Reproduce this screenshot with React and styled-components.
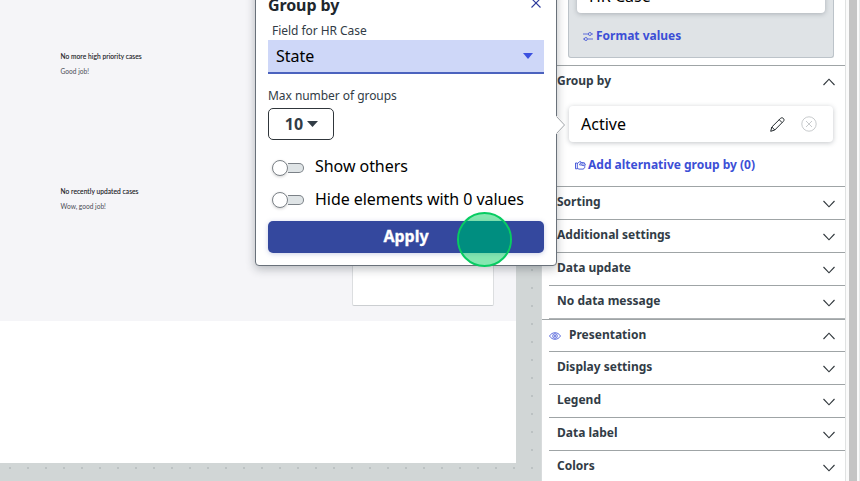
import React from "react";
import styled, { createGlobalStyle, css } from "styled-components";

const GlobalStyle = createGlobalStyle`
  *, *::before, *::after { box-sizing: border-box; }
  body { margin: 0; overflow: hidden; font-family: "Noto Sans", "Open Sans", sans-serif; }
  button { font: inherit; cursor: pointer; }
`;

const Screen = styled.div`
  position: relative;
  display: grid;
  grid-template-columns: 541px 304px 15px;
  width: 860px;
  height: 481px;
  overflow: hidden;
  background: #fff;
`;

/* Canvas */
const Canvas = styled.main`
  height: 481px;
  background-color: #d1d6d6;
  background-image: radial-gradient(circle at 9px 9px, #bcc2c3 0.9px, transparent 1.5px);
  background-size: 18px 18px;
  background-position: 1px 9px;
`;

const Page = styled.div`
  width: 516px;
  height: 463px;
  background: #fff;
`;

const Dashboard = styled.div`
  display: flex;
  justify-content: space-between;
  height: 321px;
  padding: 0 22px 0 60.5px;
  background: #f5f5f8;
`;

const Messages = styled.div`
  display: flex;
  flex-direction: column;
  gap: 105px;
  padding-top: 51px;
  font-family: Lato, sans-serif;
`;

const Message = styled.div`
  display: grid;
  grid-template-rows: 15px 15px;
  font-size: 6.6px;
  line-height: 10px;
  color: #4a4c55;
`;

const MessageTitle = styled.div`
  letter-spacing: 0.07px;
  color: #16181c;
  -webkit-text-stroke: 0.1px #16181c;
`;

const Widget = styled.div`
  width: 142px;
  height: 306px;
  border: 1px solid #dcdee0;
  border-bottom-color: #cbced1;
  border-radius: 2px;
  background: #fff;
`;

/* Sidebar */
const Sidebar = styled.aside`
  border-left: 1px solid #d8dbdc;
  height: 481px;
  overflow: hidden;
  background: #fff;
  color: #323c46;
`;

const SourceArea = styled.div`
  height: 65px;
  padding: 0 11px 0 26px;
`;

const SourceBox = styled.div`
  display: flex;
  flex-direction: column;
  justify-content: flex-end;
  align-items: stretch;
  height: 58px;
  padding: 0 8px 12px;
  border: 1px solid #bcc3c9;
  border-top: 0;
  border-radius: 0 0 3px 3px;
  background: #dfe3e6;
`;

const fieldCard = css`
  display: flex;
  align-items: center;
  border-radius: 4px;
  background: #fff;
  box-shadow: 0 1px 5px rgba(40, 50, 60, 0.28);
  color: #000;
  font-size: 16px;
`;

const SourceCard = styled.div`
  ${fieldCard}
  flex: none;
  height: 36px;
  padding: 1px 12px 0;
`;

const GroupCard = styled.div`
  ${fieldCard}
  height: 36px;
  margin: 10px 12px 0 20px;
  padding: 0 16px 0 12px;
`;

const CardLabel = styled.span`
  flex: 1;
`;

const CardActions = styled.span`
  display: flex;
  align-items: center;
  gap: 16px;
`;

const LinkButton = styled.button`
  display: flex;
  flex: none;
  align-items: center;
  gap: ${(p) => p.$gap}px;
  height: 18px;
  margin: ${(p) => p.$margin};
  padding: 0;
  border: 0;
  background: none;
  color: #3c4fd6;
  font-size: 12px;
  font-weight: 700;
  line-height: 18px;
  white-space: nowrap;
`;

const Section = styled.section`
  height: ${(p) => p.$height || 33}px;
  margin-left: ${(p) => (p.$wide ? 0 : 7)}px;
  border-top: 1px solid #9fa4a6;

  ${(p) =>
    p.$closing &&
    css`
      height: 34px;
      border-bottom: 1px solid #b0b4b6;
    `}
`;

const SectionHead = styled.div`
  display: flex;
  align-items: center;
  justify-content: space-between;
  height: 30px;
  padding: 0 10px 0 ${(p) => (p.$icon ? 7 : 8)}px;
  font-size: 12px;
  font-weight: 700;
  line-height: 18px;
`;

const SectionTitle = styled.span`
  display: flex;
  align-items: center;
  gap: 8px;
`;

const ChevronIcon = styled.svg`
  display: block;
  width: 12px;
  height: 8px;
  margin-top: ${(p) => (p.$up ? 2 : 4)}px;
  transform: ${(p) => (p.$up ? "scaleY(-1)" : "none")};
`;

const Icon = styled.svg`
  display: block;
  flex: none;
  fill: none;
  stroke: ${(p) => p.$color || "#3c4fd6"};
  stroke-width: ${(p) => p.$weight || 1};
`;

const ScrollTrack = styled.div`
  display: flex;
  padding: 0 3px 0 3px;
  border-left: 1px solid #e0e2e2;
  border-right: 1px solid #e6e8e8;
  background: #fafafa;
`;

const ScrollThumb = styled.div`
  flex: none;
  width: 8px;
  height: 481px;
  background: #c4c4c4;
`;

/* Popup */
const Popup = styled.div`
  position: absolute;
  left: 255px;
  top: -14px;
  width: 302px;
  height: 280px;
  padding: 8px 12px 0;
  border: 1px solid #69717a;
  border-radius: 4px;
  background: #fff;
  box-shadow: 0 3px 10px rgba(30, 40, 50, 0.3);
  color: #323c46;
`;

const PopupArrow = styled.svg`
  position: absolute;
  left: 299px;
  top: 128px;
  width: 11px;
  height: 20px;
`;

const PopupHead = styled.header`
  display: flex;
  justify-content: space-between;
  height: 27px;
  padding-right: 3px;
  color: #20272d;
  font-size: 16px;
  font-weight: 700;
  letter-spacing: -0.1px;
  line-height: 20px;
`;

const CloseIcon = styled.svg`
  width: 10px;
  height: 10px;
  margin-top: 3px;
`;

const Label = styled.div`
  height: ${(p) => p.$height}px;
  padding-left: ${(p) => p.$inset || 0}px;
  font-size: 12px;
  letter-spacing: -0.05px;
  line-height: 18px;
`;

const Select = styled.div`
  display: flex;
  align-items: center;
  justify-content: space-between;
  height: 34px;
  margin-bottom: 13px;
  padding: 0 11px 0 8px;
  border-bottom: 2px solid #4b62be;
  background: #ced7f8;
  color: #000;
  font-size: 16px;
`;

const NumberButton = styled.button`
  display: flex;
  align-items: center;
  justify-content: center;
  gap: 4px;
  width: 66px;
  height: 32px;
  padding: 0 0 1px 1px;
  border: 1px solid #30363b;
  border-radius: 5px;
  background: #fff;
  color: #323c46;
  font-size: 16px;
  font-weight: 700;
`;

const Caret = styled.svg`
  display: block;
  width: ${(p) => p.$width}px;
  height: 6px;
  fill: ${(p) => p.$color};
  margin-top: ${(p) => p.$drop || 0}px;
`;

const Toggles = styled.div`
  display: grid;
  grid-template-rows: 32px 32px;
  margin-top: 11px;
`;

const ToggleRow = styled.label`
  display: flex;
  align-items: center;
  gap: 11px;
  padding-left: 4px;
  color: #000;
  font-size: 16px;
  letter-spacing: -0.05px;
  line-height: 22px;
`;

const ToggleText = styled.span`
  margin-top: ${(p) => p.$shift}px;
`;

const Switch = styled.span`
  display: flex;
  align-items: center;
  width: 32px;
  height: 16px;
  margin-top: 1px;
`;

const Knob = styled.span`
  flex: none;
  width: 16px;
  height: 16px;
  border: 1px solid #7b8187;
  border-radius: 50%;
  background: #fff;
  box-shadow: 0 1px 3px rgba(0, 0, 0, 0.18);
`;

const Track = styled.span`
  flex: 1;
  height: 10px;
  border: 1px solid #7b8187;
  border-left: 0;
  border-radius: 0 5px 5px 0;
  background: #dfe4e6;
`;

const ApplyButton = styled.button`
  display: block;
  width: 276px;
  height: 32px;
  margin-top: 6px;
  padding: 0 0 2px;
  border: 0;
  border-radius: 5px;
  background: #34489e;
  box-shadow: 0 1px 5px rgba(52, 72, 158, 0.25);
  color: #fff;
  font-size: 16px;
  font-weight: 700;
  -webkit-text-stroke: 0.3px #fff;
`;

const ClickMarker = styled.div`
  position: absolute;
  left: 457px;
  top: 212px;
  width: 55px;
  height: 55px;
  border: 2px solid #07cc62;
  border-radius: 50%;
  background: rgba(0, 205, 92, 0.48);
`;

const MarkerCore = styled.div`
  height: 32px;
  margin-top: 7px;
  background: #008e80;
`;

const MarkerClip = styled.div`
  width: 51px;
  height: 51px;
  overflow: hidden;
  border-radius: 50%;
`;

function Chevron({ up }) {
  return (
    <ChevronIcon viewBox="0 0 12 8" $up={up}>
      <path d="M.5 1 6 6.8 11.5 1" fill="none" stroke="#30373c" strokeWidth="1.1" />
    </ChevronIcon>
  );
}

function Head({ children, up, icon }) {
  return (
    <SectionHead $icon={Boolean(icon)}>
      <SectionTitle>
        {icon}
        {children}
      </SectionTitle>
      <Chevron up={up} />
    </SectionHead>
  );
}

const SlidersIcon = () => (
  <Icon width="10" height="10" viewBox="0 0 10 10" $weight="0.8">
    <path d="M0 3h5.2M8.5 3H10M0 8h1.2M4.7 8H10" />
    <circle cx="6.9" cy="3" r="1.5" />
    <circle cx="2.9" cy="8" r="1.5" />
  </Icon>
);

const HandIcon = () => (
  <Icon width="11" height="10" viewBox="0 0 11 10" $weight="0.9">
    <path d="M.5 3h1.8v5.8H.5zM2.3 3.6 4.6 1.7c.8-.6 1.7 0 1.2.9h3c1.1 0 1.1 1.2.2 1.3h.6c1.1 0 1 1.5 0 1.5.8.1.7 1.4-.2 1.4.5.2.4 1.3-.5 1.3.2.5-.2 1-.8 1H4L2.3 8.4" />
    <path d="M5.8 2.6 4.5 4.9c1 .7 1.7-.1 2-1h2.3M6.4 5.4h2.8" />
  </Icon>
);

const EyeIcon = () => (
  <Icon width="12" height="10" viewBox="0 -2 12 10" $weight="0.8">
    <path d="M.5 4C3.2-.4 8.8-.4 11.5 4 8.8 8.4 3.2 8.4.5 4Z" />
    <circle cx="6" cy="4" r="2.3" />
    <circle cx="6" cy="4" r=".8" />
  </Icon>
);

const PencilIcon = () => (
  <Icon width="15" height="15" viewBox="0 0 15 15" $color="#22282c">
    <path d="M.7 14.3 1.8 10 10.5 1.4c1.9-1.8 4.8.9 2.9 2.9L4.8 13ZM1.8 10 4.8 13M9.2 2.7l2.9 2.9" />
  </Icon>
);

const ClearIcon = () => (
  <Icon width="16" height="16" viewBox="0 0 16 16" $color="#c8cbcd">
    <circle cx="8" cy="8" r="7.2" />
    <path d="m5 5 6 6M11 5l-6 6" />
  </Icon>
);

function Toggle({ children, shift = -2 }) {
  return (
    <ToggleRow>
      <Switch>
        <Knob />
        <Track />
      </Switch>
      <ToggleText $shift={shift}>{children}</ToggleText>
    </ToggleRow>
  );
}

const dataSections = ["Sorting", "Additional settings", "Data update", "No data message"];
const displaySections = ["Display settings", "Legend", "Data label", "Colors"];

export default function App() {
  return (
    <Screen>
      <GlobalStyle />
      <Canvas>
        <Page>
          <Dashboard>
            <Messages>
              <Message>
                <MessageTitle>No more high priority cases</MessageTitle>
                <div>Good job!</div>
              </Message>
              <Message>
                <MessageTitle>No recently updated cases</MessageTitle>
                <div>Wow, good job!</div>
              </Message>
            </Messages>
            <Widget />
          </Dashboard>
        </Page>
      </Canvas>

      <Sidebar>
        <SourceArea>
          <SourceBox>
            <SourceCard>HR Case</SourceCard>
            <LinkButton $gap={3} $margin="14px 0 0 6px">
              <SlidersIcon />
              Format values
            </LinkButton>
          </SourceBox>
        </SourceArea>
        <Section $height={121}>
          <Head up>Group by</Head>
          <GroupCard>
            <CardLabel>Active</CardLabel>
            <CardActions>
              <PencilIcon />
              <ClearIcon />
            </CardActions>
          </GroupCard>
          <LinkButton $gap={2} $margin="14px 0 0 26px">
            <HandIcon />
            Add alternative group by (0)
          </LinkButton>
        </Section>
        {dataSections.map((name, i) => (
          <Section key={name} $closing={i === dataSections.length - 1}>
            <Head>{name}</Head>
          </Section>
        ))}
        <Section $wide $height={32}>
          <Head up icon={<EyeIcon />}>
            Presentation
          </Head>
        </Section>
        {displaySections.map((name) => (
          <Section key={name}>
            <Head>{name}</Head>
          </Section>
        ))}
      </Sidebar>

      <ScrollTrack>
        <ScrollThumb />
      </ScrollTrack>

      <Popup>
        <PopupHead>
          Group by
          <CloseIcon viewBox="0 0 10 10">
            <path d="m.5.5 9 9M9.5.5l-9 9" stroke="#2c3a9c" strokeWidth="1.1" />
          </CloseIcon>
        </PopupHead>
        <Label $height={18} $inset={4}>
          Field for HR Case
        </Label>
        <Select>
          State
          <Caret viewBox="0 0 10 6" $width={10} $color="#3b50e0">
            <path d="M0 0h10L5 6Z" />
          </Caret>
        </Select>
        <Label $height={21}>Max number of groups</Label>
        <NumberButton>
          10
          <Caret viewBox="0 0 11 6" $width={11} $color="#323c46" $drop={1}>
            <path d="M0 0h11L5.5 6Z" />
          </Caret>
        </NumberButton>
        <Toggles>
          <Toggle>Show others</Toggle>
          <Toggle shift={0}>Hide elements with 0 values</Toggle>
        </Toggles>
        <ApplyButton>Apply</ApplyButton>
        <PopupArrow viewBox="0 0 11 20">
          <path d="M0 1h2l8 9-8 9H0Z" fill="#fff" />
          <path d="M1.5 1.5 9.5 10l-8 8.5" fill="none" stroke="#a0a4a8" />
        </PopupArrow>
      </Popup>

      <ClickMarker>
        <MarkerClip>
          <MarkerCore />
        </MarkerClip>
      </ClickMarker>
    </Screen>
  );
}
